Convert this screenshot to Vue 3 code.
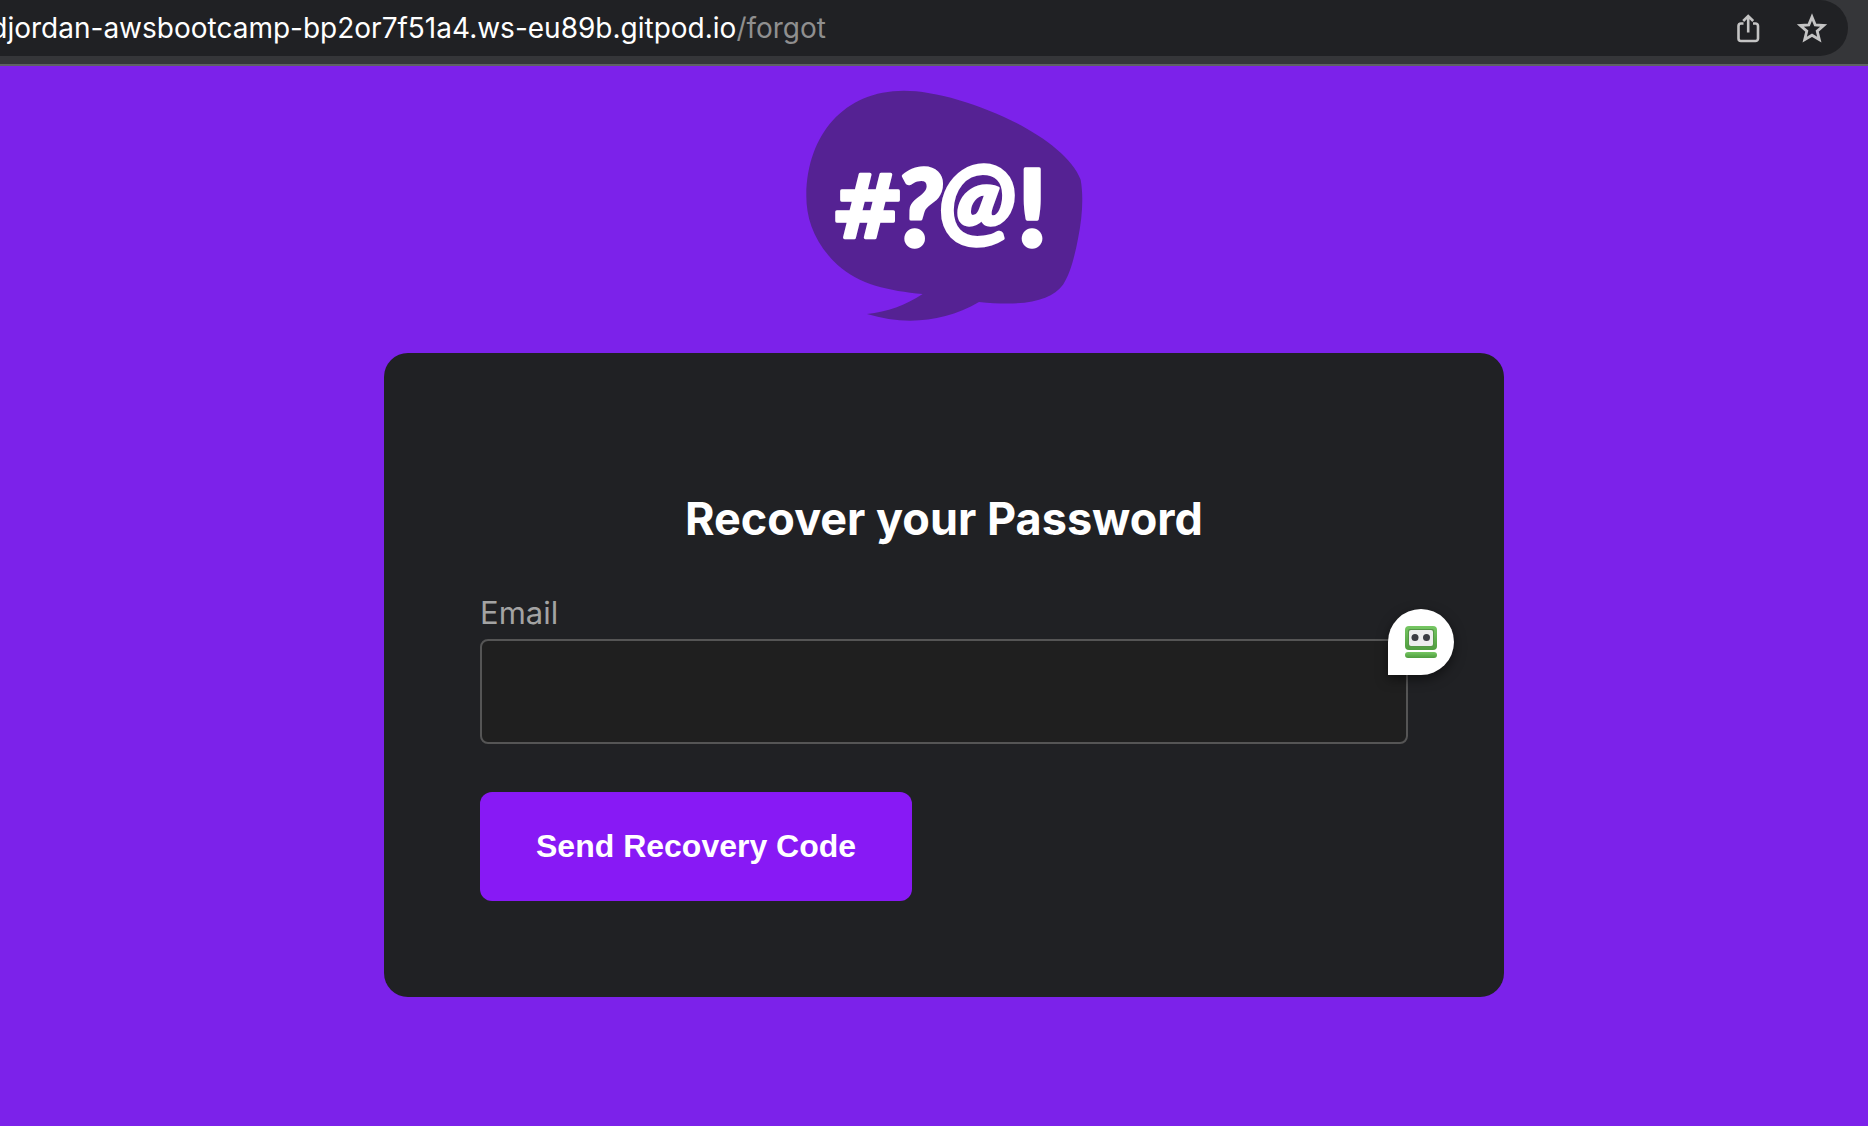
<script setup>
import { ref } from 'vue'

const email = ref('')
const host = 'djordan-awsbootcamp-bp2or7f51a4.ws-eu89b.gitpod.io'
const path = '/forgot'
</script>

<template>
  <div class="window">
    <header class="toolbar">
      <div class="address">
        <div class="url"><span>{{ host }}</span><span class="path">{{ path }}</span></div>
        <div class="actions">
          <button type="button" class="icon" aria-label="Share">
            <svg width="32" height="32" viewBox="0 0 32 32" fill="none" stroke="#c4c4c4" stroke-width="2.6">
              <path d="M11.500 11.500H9A2.500 2.500 0 0 0 6.500 14V26.500A2.500 2.500 0 0 0 9 29h14.500a2.500 2.500 0 0 0 2.500-2.500V14a2.500 2.500 0 0 0-2.500-2.500H21" />
              <path d="M16.200 20.500V4M11.200 9l5-5 5 5" />
            </svg>
          </button>
          <button type="button" class="icon" aria-label="Bookmark">
            <svg width="32" height="32" viewBox="0 0 32 32" fill="none" stroke="#c4c4c4" stroke-width="2.8">
              <path d="M16 5l3.200 7.900 8.500.6-6.500 5.600 2.100 8.500L16 23.200l-7.300 4.400 2.100-8.500-6.500-5.600 8.500-.6z" />
            </svg>
          </button>
        </div>
      </div>
    </header>

    <main class="page">
      <svg class="logo" viewBox="48 46 834 693" role="img" aria-label="Logo">
        <path
          fill="#552293"
          d="M345 48C510 48 822 178 875 315C884 365 880 430 867 492C856 550 842 600 822 630C785 678 710 696 570 682C465 744 345 752 234 718C295 712 350 692 401 658C300 648 210 630 145 570C75 505 51 430 52 360C55 180 165 48 345 48Z"
        />
        <g class="mark">
          <text class="hash" x="126" y="486" font-size="262">#</text>
          <text class="slant" x="320" y="514" font-size="318">?</text>
          <text class="slant" x="450" y="478" font-size="298">@</text>
          <text x="684" y="514" font-size="318">!</text>
        </g>
      </svg>

      <form class="card" @submit.prevent>
        <h1>Recover your Password</h1>
        <div class="field">
          <label for="email">Email</label>
          <div class="control">
            <input id="email" v-model="email" type="text" />
            <button type="button" class="badge" aria-label="Fill form">
              <svg width="32" height="32" viewBox="0 0 32 32">
                <defs>
                  <linearGradient id="green" x1="0" y1="0" x2="0" y2="1">
                    <stop offset="0" stop-color="#76c763" />
                    <stop offset="1" stop-color="#4f9c3e" />
                  </linearGradient>
                </defs>
                <rect width="32" height="24" rx="4" fill="url(#green)" />
                <rect x="3" y="3" width="26" height="18" rx="2" fill="#559746" />
                <rect x="4" y="4" width="24" height="16" rx="2" fill="#ededed" />
                <circle cx="10" cy="11.500" r="3.500" fill="#3b3c42" />
                <circle cx="21.500" cy="11.500" r="3.500" fill="#3b3c42" />
                <rect y="26" width="32" height="6" rx="3" fill="url(#green)" />
              </svg>
            </button>
          </div>
        </div>
        <button type="submit" class="submit">Send Recovery Code</button>
      </form>
    </main>
  </div>
</template>

<style>
body {
  margin: 0;
  background: #7c22ea;
}
</style>

<style scoped>
.window {
  font-family: Inter, "Liberation Sans", sans-serif;
  color: #fff;
}
button {
  border: 0;
  padding: 0;
  cursor: pointer;
}
.toolbar {
  padding: 0 20px 8px 0;
  background: #353639;
  border-bottom: 2px solid #5f6164;
}
.address {
  display: flex;
  align-items: center;
  justify-content: space-between;
  height: 56px;
  padding-right: 20px;
  border-radius: 0 28px 28px 0;
  background: #202124;
}
.url {
  display: flex;
  justify-content: flex-end;
  width: 826px;
  overflow: hidden;
  font-size: 28px;
  line-height: 40px;
  white-space: nowrap;
}
.path {
  color: #8f8f8f;
}
.actions {
  display: flex;
  gap: 32px;
}
.icon {
  display: flex;
  background: none;
}
.page {
  display: flex;
  flex-direction: column;
  align-items: center;
  gap: 32px;
  padding: 24px 0 128px 20px;
}
.logo {
  width: 278px;
  height: 231px;
}
.mark {
  fill: #fff;
  stroke: #fff;
  stroke-width: 10px;
  stroke-linejoin: round;
  font-family: Lato, sans-serif;
  font-weight: 900;
}
.hash {
  font-family: "DejaVu Sans", sans-serif;
}
.slant {
  font-style: italic;
}
.card {
  box-sizing: border-box;
  width: 100%;
  max-width: 1120px;
  padding: 136px 96px 96px;
  border-radius: 24px;
  background: #202124;
}
h1 {
  margin: 0 0 46px;
  font-size: 45px;
  font-weight: 700;
  line-height: 60px;
  text-align: center;
}
.field {
  display: flex;
  flex-direction: column;
  gap: 8px;
}
label {
  align-self: flex-start;
  color: #a3a3a3;
  font-size: 31px;
  line-height: 36px;
}
.control {
  position: relative;
}
input {
  display: block;
  box-sizing: border-box;
  width: 100%;
  height: 105px;
  padding: 0 32px;
  border: 2px solid #555;
  border-radius: 8px;
  outline: 0;
  background: #1f1f1f;
  color: #fff;
  font: inherit;
  font-size: 31px;
}
.badge {
  position: absolute;
  top: -30px;
  right: -46px;
  display: flex;
  align-items: center;
  justify-content: center;
  width: 66px;
  height: 66px;
  border-radius: 33px 33px 33px 0;
  background: #fff;
  box-shadow: 0 4px 12px rgba(0, 0, 0, 0.5);
}
.submit {
  margin-top: 48px;
  padding: 36px 56px;
  border-radius: 12px;
  background: #8819f5;
  color: #fff;
  font-family: "Liberation Sans", Arial, sans-serif;
  font-size: 32px;
  font-weight: 700;
  line-height: 37px;
}
</style>
